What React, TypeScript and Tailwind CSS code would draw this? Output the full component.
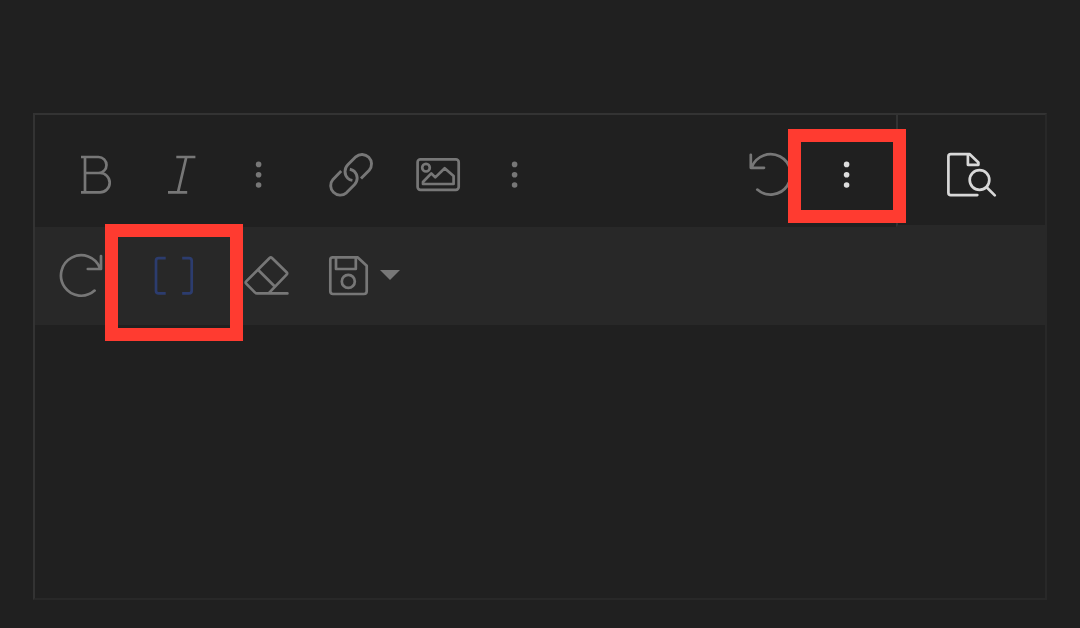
import type { ReactNode } from "react";

type IconProps = { children: ReactNode; viewBox?: string; className?: string };

function Icon({ children, viewBox = "0 0 48 48", className = "h-12 w-12" }: IconProps) {
  return (
    <svg
      viewBox={viewBox}
      className={`block shrink-0 ${className}`}
      fill="none"
      stroke="currentColor"
      strokeWidth="2.7"
      strokeLinecap="round"
      strokeLinejoin="round"
      aria-hidden="true"
    >
      {children}
    </svg>
  );
}

function ToolButton({
  label,
  children,
  className = "text-[#777777]",
}: {
  label: string;
  children: ReactNode;
  className?: string;
}) {
  return (
    <button type="button" aria-label={label} className={`flex shrink-0 items-center ${className}`}>
      {children}
    </button>
  );
}

function MoreIcon() {
  return (
    <Icon viewBox="0 0 24 48" className="h-12 w-6">
      <g fill="currentColor" stroke="none">
        <circle cx="12.6" cy="13.4" r="2.8" />
        <circle cx="12.6" cy="23.7" r="2.8" />
        <circle cx="12.6" cy="34" r="2.8" />
      </g>
    </Icon>
  );
}

const linkHalf =
  "M33 27.5 41.2 19.2A9.5 9.5 0 0 0 27.8 5.8L19.8 13.8A9.5 9.5 0 0 0 19.8 27.2Q21.6 28.9 24.4 29.4";

export default function App() {
  return (
    <main className="min-h-screen bg-[#202020] px-[33px] pt-[113px] font-['Inter',sans-serif]">
      <section
        aria-label="Text editor"
        className="border-2 border-t-[#333333] border-r-[#282828] border-b-[#282828] border-l-[#333333]"
      >
        <div role="toolbar" aria-label="Formatting" className="flex h-28">
          <div className="flex flex-1 items-center justify-between pt-2 pr-[38px] pl-[37px]">
            <div className="flex items-center gap-[58px]">
              <div className="flex items-center gap-[39px]">
                <ToolButton label="Bold">
                  <Icon>
                    <path
                      strokeLinecap="butt"
                      d="M9 6H26.5A8 8 0 0 1 26.5 22H13M26.5 22H28A9.7 9.7 0 0 1 28 41.4H9M13 6V41.4"
                    />
                  </Icon>
                </ToolButton>
                <ToolButton label="Italic">
                  <Icon>
                    <path strokeLinecap="butt" d="M17.3 6H36.4M9 41.4H28.2M27.3 6 19 41.4" />
                  </Icon>
                </ToolButton>
                <ToolButton label="More text options">
                  <MoreIcon />
                </ToolButton>
              </div>
              <div className="flex items-center gap-[39px]">
                <ToolButton label="Insert link">
                  <Icon>
                    <g strokeLinecap="butt" strokeWidth="2.9">
                      <path d={linkHalf} />
                      <path d={linkHalf} transform="rotate(180 23.1 23.8)" />
                    </g>
                  </Icon>
                </ToolButton>
                <ToolButton label="Insert image">
                  <Icon>
                    <rect x="2.6" y="8.4" width="41.1" height="30.4" rx="2.8" />
                    <circle cx="11" cy="16.7" r="3.8" />
                    <path d="M8 33V31L16.3 22.4 20.3 26.4 29.7 17.2 38.6 25V33Z" />
                  </Icon>
                </ToolButton>
                <ToolButton label="More insert options">
                  <MoreIcon />
                </ToolButton>
              </div>
            </div>
            <div className="flex items-center gap-[39px]">
              <ToolButton label="Undo">
                <Icon>
                  <path d="M3.8 3.8V16.8H17M4.8 16A20.2 20.2 0 1 1 10.3 38.6" />
                </Icon>
              </ToolButton>
              <div className="relative">
                <ToolButton label="More options" className="text-[#dddddd]">
                  <MoreIcon />
                </ToolButton>
                <span className="pointer-events-none absolute -top-[22px] -left-[46px] h-[94px] w-[118px] border-[13px] border-[#ff3b30]" />
              </div>
            </div>
          </div>
          <div className="flex w-[149px] items-center justify-center border-b-2 border-l-2 border-b-[#282828] border-l-[#333333] pt-[10px]">
            <ToolButton label="Preview" className="text-[#d8d8d8]">
              <Icon viewBox="0 0 55 48" className="h-12 w-[55px]">
                <path d="M33.3 44.1H6.8Q4.4 44.1 4.4 41.7V5.5Q4.4 3.1 6.8 3.1H25.5L34.4 11.5V13.8H23.9V3.6" />
                <circle cx="35.5" cy="29" r="9.8" />
                <path d="M42.6 36.3 50.8 44.4" />
              </Icon>
            </ToolButton>
          </div>
        </div>

        <div
          role="toolbar"
          aria-label="More tools"
          className="flex h-[98px] items-center gap-9 bg-[#282828] pl-[22px]"
        >
          <div className="flex items-center gap-[45px]">
            <ToolButton label="Redo">
              <Icon>
                <path d="M44 4V17H30.8M43 16.2A20.2 20.2 0 1 0 37.6 38.6" />
              </Icon>
            </ToolButton>
            <div className="relative">
              <ToolButton label="Show blocks" className="text-[#2c3c6e]">
                <Icon>
                  <path
                    strokeLinecap="butt"
                    d="M15.7 6.1H8.7Q6 6.1 6 8.8V38.7Q6 41.4 8.7 41.4H15.7M32.2 6.1H39Q41.7 6.1 41.7 8.8V38.7Q41.7 41.4 39 41.4H32.2"
                  />
                </Icon>
              </ToolButton>
              <span className="pointer-events-none absolute -top-[28px] -left-[45px] z-10 h-[117px] w-[138px] border-[13px] border-[#ff3b30]" />
            </div>
            <ToolButton label="Clear formatting">
              <Icon>
                <path d="M44.4 41.4H14Q12.8 41.4 11.8 40.4L3.2 31.6Q2.2 30.5 3.2 29.4L26.6 6Q27.8 4.9 29 6L43.6 20.2Q44.8 21.4 43.6 22.6L26.3 40.6M15.3 18 31.8 34.5" />
              </Icon>
            </ToolButton>
          </div>
          <ToolButton label="Save" className="gap-[5px] text-[#777777]">
            <Icon>
              <path d="M5.7 5.4H30.8L39.7 13.8V39.3Q39.7 42 37 42H6Q3.3 42 3.3 39.3V7.8Q3.3 5.4 5.7 5.4Z" />
              <path d="M9 5.8V17H28.8V5.8" />
              <circle cx="21.3" cy="29.4" r="6.5" />
            </Icon>
            <Icon viewBox="0 0 20 48" className="h-12 w-5">
              <path d="M0 18H20L10 28Z" fill="currentColor" stroke="none" />
            </Icon>
          </ToolButton>
        </div>

        <textarea
          aria-label="Content"
          className="block h-[273px] w-full resize-none bg-transparent p-6 text-base text-[#dddddd] outline-none"
        />
      </section>
    </main>
  );
}
